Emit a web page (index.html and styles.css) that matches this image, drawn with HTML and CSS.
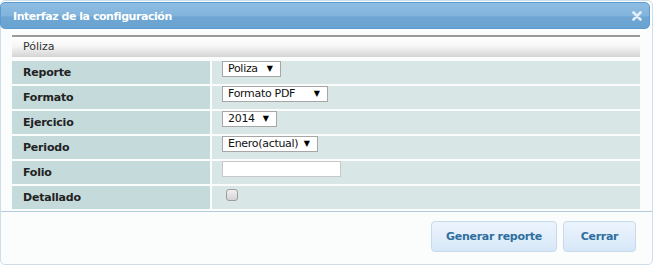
FILE: index.html
```html
<!DOCTYPE html>
<html lang="es">
<head>
<meta charset="utf-8">
<title>Interfaz de la configuración</title>
<link rel="stylesheet" href="styles.css">
</head>
<body>
<div class="dialog">
  <div class="titlebar">
    <span class="title">Interfaz de la configuración</span>
    <span class="close" aria-label="Cerrar">
      <svg width="10" height="10" viewBox="0 0 10 10"><path d="M1.5 1.5 L8.5 8.5 M8.5 1.5 L1.5 8.5" stroke="#e4eef8" stroke-width="2.6" stroke-linecap="round"/></svg>
    </span>
  </div>
  <div class="content">
    <div class="section-head">Póliza</div>
    <div class="grid">
      <div class="label">Reporte</div>
      <div class="value"><span class="select w59">Poliza<span class="arrow">▼</span></span></div>
      <div class="label">Formato</div>
      <div class="value"><span class="select w106">Formato PDF<span class="arrow">▼</span></span></div>
      <div class="label">Ejercicio</div>
      <div class="value"><span class="select w55">2014<span class="arrow">▼</span></span></div>
      <div class="label">Periodo</div>
      <div class="value"><span class="select w96">Enero(actual)<span class="arrow">▼</span></span></div>
      <div class="label">Folio</div>
      <div class="value"><span class="input"></span></div>
      <div class="label">Detallado</div>
      <div class="value"><span class="checkbox"></span></div>
    </div>
  </div>
  <div class="footer">
    <button class="btn btn-wide">Generar reporte</button>
    <button class="btn btn-narrow">Cerrar</button>
  </div>
</div>
</body>
</html>
```

FILE: styles.css
```css
html, body {
  margin: 0;
  padding: 0;
  background: #ffffff;
}
body {
  font-family: "DejaVu Sans", Verdana, sans-serif;
  font-size: 11px;
  color: #222;
}
.dialog {
  box-sizing: border-box;
  width: 653px;
  height: 265px;
  border: 1px solid #cfdde9;
  border-radius: 5px;
  background: #fbfdfd;
  padding: 1px 2px 0 0;
  display: flex;
  flex-direction: column;
}
.titlebar {
  box-sizing: border-box;
  height: 27px;
  margin-left: -1px;
  border: 1px solid #5c9bd0;
  border-radius: 5px;
  background: linear-gradient(to bottom, #8ebde2 0%, #82b4dc 50%, #6ea6d3 56%, #6aa3d1 100%);
  display: flex;
  align-items: center;
  justify-content: space-between;
  padding: 2px 7px 0 12px;
}
.title {
  color: #ffffff;
  font-weight: bold;
  font-size: 11px;
  letter-spacing: -0.45px;
}
.close {
  display: flex;
  width: 10px;
  height: 10px;
  margin-top: -2px;
}
.content {
  padding: 6px 10px 2px 11px;
  border-bottom: 1px solid #b3cbe0;
  margin-right: -2px;
}
.section-head {
  box-sizing: border-box;
  height: 22px;
  width: 628px;
  border-top: 2px solid #9a9a9a;
  background: linear-gradient(to bottom, #ffffff 0%, #f6f6f6 45%, #d4d4d4 100%);
  padding-left: 11px;
  line-height: 19px;
  color: #333;
}
.grid {
  width: 628px;
  display: grid;
  grid-template-columns: 198px 428px;
  column-gap: 2px;
  row-gap: 2px;
  margin-top: 4px;
}
.label {
  height: 23px;
  background: #c5dadb;
  font-weight: bold;
  padding-left: 11px;
  line-height: 24px;
  color: #222;
  letter-spacing: -0.2px;
}
.value {
  height: 23px;
  background: #d9e6e6;
  padding-left: 10px;
  display: flex;
  align-items: flex-start;
}
.select {
  box-sizing: border-box;
  height: 16px;
  background: #fff;
  border: 1px solid #a6a6a6;
  padding-left: 5px;
  padding-right: 7px;
  display: flex;
  align-items: center;
  justify-content: space-between;
  font-size: 11px;
  letter-spacing: -0.3px;
  color: #111;
  line-height: 14px;
  white-space: nowrap;
}
.arrow {
  font-size: 8px;
  color: #000;
  letter-spacing: 0;
}
.w59 { width: 59px; }
.w106 { width: 106px; }
.w55 { width: 55px; }
.w96 { width: 96px; }
.input {
  box-sizing: border-box;
  width: 119px;
  height: 16px;
  background: #fff;
  border: 1px solid #c8c8c8;
}
.checkbox {
  box-sizing: border-box;
  width: 12px;
  height: 12px;
  margin-top: 3px;
  margin-left: 4px;
  border: 1px solid #9c9c9c;
  border-radius: 3px;
  background: linear-gradient(to bottom, #f0f0f0, #d4d4d4);
}
.footer {
  flex: 1;
  display: flex;
  justify-content: flex-end;
  align-items: flex-start;
  gap: 6px;
  padding: 9px 14px 0 0;
}
.btn {
  box-sizing: border-box;
  height: 31px;
  padding: 0;
  border: 1px solid #c5dbec;
  border-radius: 4px;
  background: linear-gradient(to bottom, #ecf4fd 0%, #e3eefb 50%, #d6e7f8 100%);
  color: #2e6e9e;
  font-family: "DejaVu Sans", Verdana, sans-serif;
  font-size: 11px;
  font-weight: bold;
  letter-spacing: -0.3px;
  white-space: nowrap;
  cursor: pointer;
}
.btn-wide { width: 126px; }
.btn-narrow { width: 73px; }
```
